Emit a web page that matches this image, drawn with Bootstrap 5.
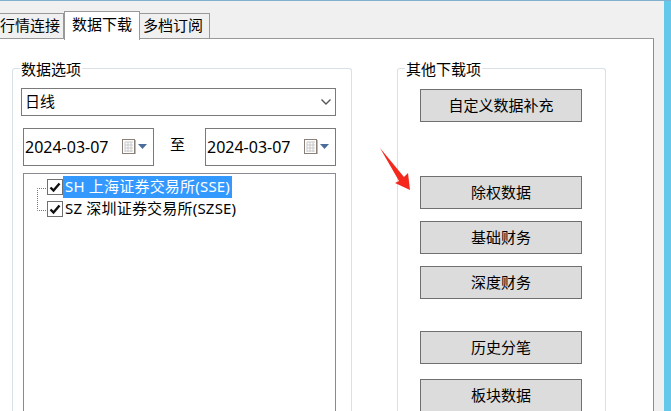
<!DOCTYPE html>
<html lang="zh"><head><meta charset="utf-8">
<link href="https://cdn.jsdelivr.net/npm/bootstrap@5.3.0/dist/css/bootstrap.min.css" rel="stylesheet">
<style>
html,body{margin:0;height:411px;overflow:hidden;background:#f0f0f0;}
body{font-family:"Noto Sans","Noto Sans CJK SC",sans-serif;font-size:15px;color:#000;line-height:1;}
.topline{height:1px;background:#7fb0d0;}
.frame{height:410px;}
.mainw{width:655px;}
.tabstrip{height:38px;padding-top:12px;flex:none;}
.tabi{height:26px;border:1px solid #999;border-left:0;padding:4px 0 0;background:#f0f0f0;white-space:nowrap;text-align:center;}
.tabi.first{width:64px;text-align:left;}
.tabi.on{height:29px;margin-top:-2px;background:#fff;border-bottom:0;border-left:1px solid #999;width:76px;padding:5px 0 0;position:relative;z-index:1;}
.tabi.last{width:70px;padding-right:3px;}
.tabrule{flex:1;border-bottom:1px solid #999;height:26px;}
.pagebody{height:372px;background:#fff;border-right:1px solid #8c8c96;padding:29px 0 0 12px;overflow:hidden;}
.gap1{width:9px;background:#f0f0f0;}
.blue{width:7px;background:#63c8ea;margin-left:1px;}
.groupl{width:340px;height:343px;border:1px solid #d8e0e8;border-bottom:0;border-radius:3px 3px 0 0;position:relative;padding:19px 0 0 8px;flex:none;}
.groupr{width:209px;height:343px;border:1px solid #d8e0e8;border-bottom:0;border-radius:3px 3px 0 0;position:relative;margin-left:45px;padding:20px 0 0 22px;flex:none;}
.glabel{position:absolute;top:-9px;left:7px;background:#fff;padding:0 1px;line-height:18px;}
.dropbox{width:315px;height:28px;border:1px solid #7a7a7a;padding:0 4px 1px 3px;}
.dateb{width:131px;height:38px;border:1px solid #7a7a7a;padding:0 0 0 1px;}
.datetxt{font-size:16px;}
.daterow{margin-top:12px;margin-left:2px;width:313px;}
.zhi{margin:0 4px 5px 0;}
.treebox{width:313px;height:238px;border:1px solid #8a8a92;border-bottom:0;margin-top:7px;margin-left:2px;padding-top:2px;position:relative;}
.treerow{height:22px;padding-left:23px;}
.tick{width:16px;height:16px;border:1px solid #707070;background:#fff;flex:none;}
.tlabel{padding:2px 2px 3px 2px;line-height:17px;white-space:nowrap;letter-spacing:.2px;}
.tlabel.sel{background:#3399ff;color:#fff;}
.dots{position:absolute;left:13px;top:14px;}
.btnlist{height:322px;overflow:hidden;}
.gbtn{display:block;width:162px;height:33px;border:1px solid #707070;background:#dcdcdc;border-radius:0;padding:0 0 1px;font-size:15px;color:#000;line-height:1;}
.arrow{position:absolute;left:-18px;top:79px;}
.mt-btn1{margin-top:54px;}.mt-btn2{margin-top:12px;}.mt-btn3{margin-top:32px;}.mt-btn4{margin-top:15px;}
</style></head>
<body>
<div class="topline"></div>
<div class="frame d-flex">
 <div class="mainw d-flex flex-column">
  <div class="tabstrip d-flex">
   <div class="tabi first">行情连接</div>
   <div class="tabi on">数据下载</div>
   <div class="tabi last">多档订阅</div>
   <div class="tabrule"></div>
  </div>
  <div class="pagebody d-flex">
   <div class="groupl">
    <div class="glabel">数据选项</div>
    <div class="dropbox d-flex align-items-center justify-content-between">
     <span>日线</span>
     <svg width="10" height="6" viewBox="0 0 10 6"><path d="M0.5 0.5 L5 5 L9.5 0.5" fill="none" stroke="#555" stroke-width="1.4"/></svg>
    </div>
    <div class="daterow d-flex align-items-center justify-content-between">
     <div class="dateb d-flex align-items-center"><span class="datetxt">2024-03-07</span>
      <svg class="ms-auto me-1" width="27" height="16" viewBox="0 0 27 16"><rect x="0.5" y="0.5" width="12" height="14" fill="#fff" stroke="#8a8078"/><path d="M3 3H11M3 6H11M3 9H11M3 12H11M3 3V13M6 3V13M9 3V13" stroke="#c8c8c8"/><path d="M13.5 1V15" stroke="#bbb"/><path d="M16 5H25L20.500 10Z" fill="#4a6d9c"/></svg></div>
     <span class="zhi">至</span>
     <div class="dateb d-flex align-items-center"><span class="datetxt">2024-03-07</span>
      <svg class="ms-auto me-1" width="27" height="16" viewBox="0 0 27 16"><rect x="0.5" y="0.5" width="12" height="14" fill="#fff" stroke="#8a8078"/><path d="M3 3H11M3 6H11M3 9H11M3 12H11M3 3V13M6 3V13M9 3V13" stroke="#c8c8c8"/><path d="M13.5 1V15" stroke="#bbb"/><path d="M16 5H25L20.500 10Z" fill="#4a6d9c"/></svg></div>
    </div>
    <div class="treebox">
     <svg class="dots" width="12" height="24" viewBox="0 0 12 24"><path d="M11 0.500H0.500V22.500H11" fill="none" stroke="#777" stroke-dasharray="1 1"/></svg>
     <div class="treerow d-flex align-items-center"><span class="tick d-flex align-items-center justify-content-center"><svg width="12" height="11" viewBox="0 0 12 11"><path d="M1.500 5.500L4.500 8.500L10.500 1.500" fill="none" stroke="#111" stroke-width="2.400"/></svg></span><span class="tlabel sel">SH 上海证券交易所(SSE)</span></div>
     <div class="treerow d-flex align-items-center"><span class="tick d-flex align-items-center justify-content-center"><svg width="12" height="11" viewBox="0 0 12 11"><path d="M1.500 5.500L4.500 8.500L10.500 1.500" fill="none" stroke="#111" stroke-width="2.400"/></svg></span><span class="tlabel">SZ 深圳证券交易所(SZSE)</span></div>
    </div>
   </div>
   <div class="groupr">
    <div class="glabel">其他下载项</div>
    <svg class="arrow" width="32" height="44" viewBox="0 0 32 44"><path d="M0 0 L24 29 L28 25 L30 42 L15 35 L19 33Z" fill="#f5281e"/></svg>
    <div class="btnlist">
    <button class="gbtn btn">自定义数据补充</button>
    <button class="gbtn btn mt-btn1">除权数据</button>
    <button class="gbtn btn mt-btn2">基础财务</button>
    <button class="gbtn btn mt-btn2">深度财务</button>
    <button class="gbtn btn mt-btn3">历史分笔</button>
    <button class="gbtn btn mt-btn4">板块数据</button>
    </div>
   </div>
  </div>
 </div>
 <div class="gap1"></div>
 <div class="blue"></div>
</div>
</body></html>
